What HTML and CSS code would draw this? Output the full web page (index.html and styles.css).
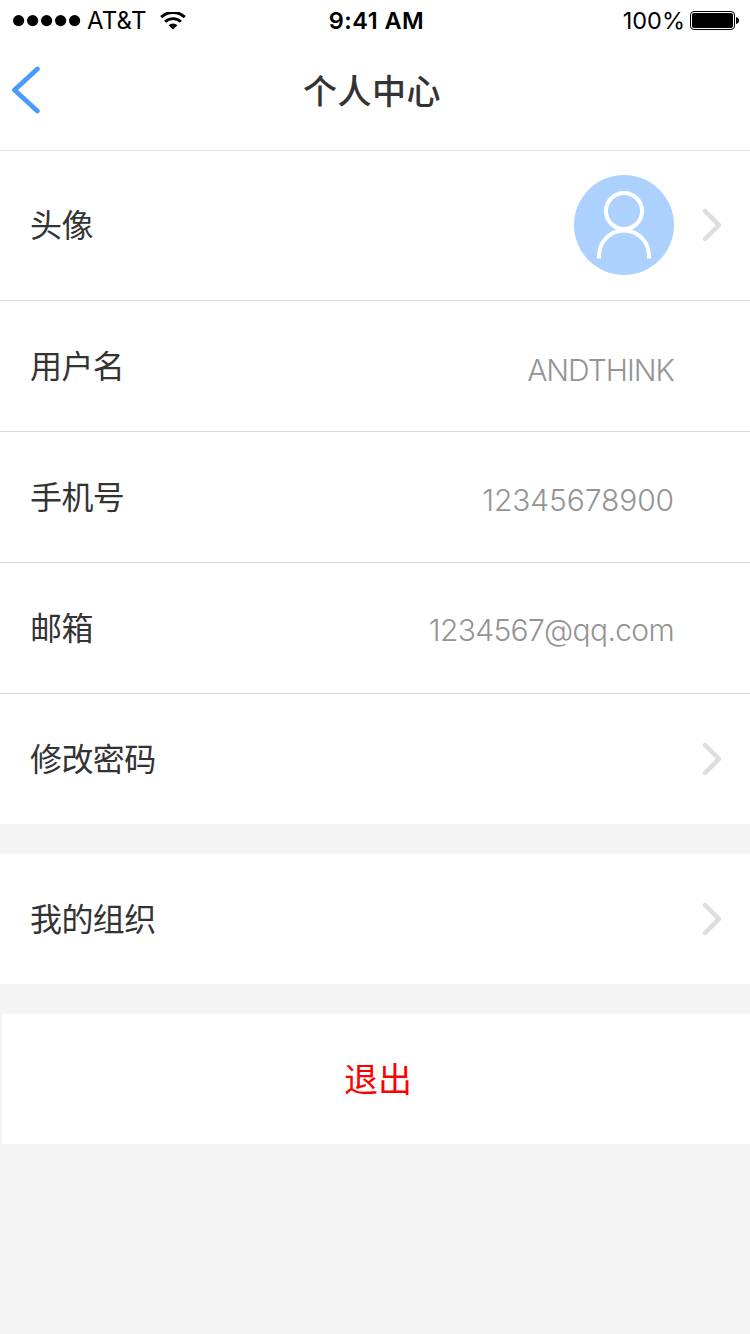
FILE: index.html
```html
<!DOCTYPE html>
<html lang="zh-CN">
<head>
  <meta charset="UTF-8">
  <meta name="viewport" content="width=device-width, initial-scale=1.0">
  <title>个人中心</title>
  <link rel="stylesheet" href="styles.css">
</head>
<body>

  <!-- Status bar -->
  <div class="status-bar">
    <div class="status-left">
      <svg class="signal" width="68" height="12" viewBox="0 0 68 12">
        <circle cx="5.6" cy="5.6" r="5.6"/>
        <circle cx="19.6" cy="5.6" r="5.6"/>
        <circle cx="33.6" cy="5.6" r="5.6"/>
        <circle cx="47.6" cy="5.6" r="5.6"/>
        <circle cx="61.6" cy="5.6" r="5.6"/>
      </svg>
      <span class="carrier">AT&amp;T</span>
      <svg class="wifi" width="26" height="18" viewBox="0 0 26 18" fill="none" stroke="#000">
        <path d="M1.2 5.2 A17 17 0 0 1 24.8 5.2" stroke-width="3"/>
        <path d="M5.1 9.8 A11.3 11.3 0 0 1 20.9 9.8" stroke-width="2.9"/>
        <path d="M8.6 13.2 A6.4 6.4 0 0 1 17.4 13.2 L13 17.4 Z" fill="#000" stroke="none"/>
      </svg>
    </div>
    <div class="time">9:41 AM</div>
    <div class="status-right">
      <span class="percent">100%</span>
      <svg class="battery" width="49" height="19" viewBox="0 0 49 19">
        <rect x="0.5" y="0.5" width="44" height="18" rx="3.5" fill="none" stroke="#000"/>
        <rect x="2" y="2" width="41" height="15" rx="2"/>
        <path d="M46 6 Q49 7 49 9.5 Q49 12 46 13 Z"/>
      </svg>
    </div>
  </div>

  <!-- Nav bar -->
  <div class="nav-bar">
    <svg class="back" width="30" height="50" viewBox="0 0 30 50">
      <path d="M25.3 5 L2.5 26 L25.3 47" fill="none" stroke="#4b9bfd" stroke-width="4.8" stroke-linecap="round" stroke-linejoin="round"/>
    </svg>
    <h1 class="title">个人中心</h1>
  </div>

  <!-- Account info -->
  <div class="group">
    <div class="row row-avatar">
      <span class="label">头像</span>
      <svg class="avatar" width="100" height="100" viewBox="0 0 100 100">
        <circle cx="50" cy="50" r="50" fill="#acd1ff"/>
        <g fill="none" stroke="#fff" stroke-width="4">
          <circle cx="50" cy="36" r="18"/>
          <path d="M25 83.5 V81 A25 25.5 0 0 1 75 81 V83.5"/>
        </g>
      </svg>
      <svg class="arrow" width="20" height="34" viewBox="0 0 20 34">
        <path d="M3 3 L17 17 L3 31"/>
      </svg>
    </div>
    <div class="row">
      <span class="label">用户名</span>
      <span class="value">ANDTHINK</span>
    </div>
    <div class="row">
      <span class="label">手机号</span>
      <span class="value value-phone">12345678900</span>
    </div>
    <div class="row">
      <span class="label">邮箱</span>
      <span class="value value-email">1234567@qq.com</span>
    </div>
    <div class="row">
      <span class="label">修改密码</span>
      <svg class="arrow" width="20" height="34" viewBox="0 0 20 34">
        <path d="M3 3 L17 17 L3 31"/>
      </svg>
    </div>
  </div>

  <div class="group">
    <div class="row">
      <span class="label">我的组织</span>
      <svg class="arrow" width="20" height="34" viewBox="0 0 20 34">
        <path d="M3 3 L17 17 L3 31"/>
      </svg>
    </div>
  </div>

  <button class="logout">退出</button>

</body>
</html>
```
FILE: styles.css
```css
* {
  box-sizing: border-box;
}

body {
  margin: 0;
  min-height: 100vh;
  background-color: #f4f4f4;
  color: #333;
  font-family: "Noto Sans CJK SC", sans-serif;
}

.status-bar {
  display: grid;
  grid-template-columns: 1fr auto 1fr;
  align-items: center;
  height: 40px;
  padding: 1px 11px 0 13px;
  background-color: #fff;
  color: #000;
  font-family: Inter, sans-serif;
  font-size: 24px;
  line-height: 39px;
}

.status-left,
.status-right {
  display: flex;
  align-items: center;
}

.status-right {
  justify-content: flex-end;
}

.carrier {
  margin-left: 6px;
  letter-spacing: 0.2px;
}

.wifi {
  margin-left: 13px;
}

.time {
  padding-left: 1px;
  font-size: 23.5px;
  font-weight: 600;
  letter-spacing: 0.5px;
}

.percent {
  font-size: 23.5px;
}

.battery {
  margin-left: 5px;
}

.nav-bar {
  display: grid;
  grid-template-columns: 60px 1fr 60px;
  height: 111px;
  padding-top: 24px;
  background-color: #fff;
  border-bottom: 1px solid #e4e4e4;
}

.back {
  margin-left: 12px;
}

.title {
  margin: 0;
  padding: 1px 6px 0 0;
  font-size: 34px;
  font-weight: 500;
  line-height: 50px;
  letter-spacing: 0.5px;
  text-align: center;
}

.group {
  margin-bottom: 30px;
  background-color: #fff;
}

.row {
  display: flex;
  align-items: center;
  height: 131px;
  padding: 0 28px 0 30px;
  border-bottom: 1px solid #d9d9d9;
}

.row:last-child {
  height: 130px;
  border-bottom: none;
}

.row-avatar {
  height: 150px;
  padding-bottom: 2px;
}

.label {
  flex: 1;
  padding-bottom: 5px;
  font-size: 32px;
  line-height: 48px;
  letter-spacing: -0.6px;
}

.row-avatar .label {
  padding-bottom: 3px;
}

.value {
  margin-right: 48px;
  padding-top: 8px;
  color: #949494;
  font-family: Inter, sans-serif;
  font-size: 30px;
  font-weight: 300;
  line-height: 38px;
  letter-spacing: -1px;
}

.value-phone {
  padding-top: 6px;
  letter-spacing: -0.1px;
}

.value-email {
  padding-top: 4px;
  letter-spacing: -0.65px;
}

.avatar {
  margin-right: 28px;
}

.arrow path {
  fill: none;
  stroke: #ddd;
  stroke-width: 4.5;
  stroke-linecap: round;
  stroke-linejoin: round;
}

.logout {
  display: block;
  width: 748px;
  height: 130px;
  margin-left: 2px;
  padding: 0 0 3px 4px;
  border: none;
  background-color: #fff;
  color: #f00;
  font-family: inherit;
  font-size: 34px;
}
```
